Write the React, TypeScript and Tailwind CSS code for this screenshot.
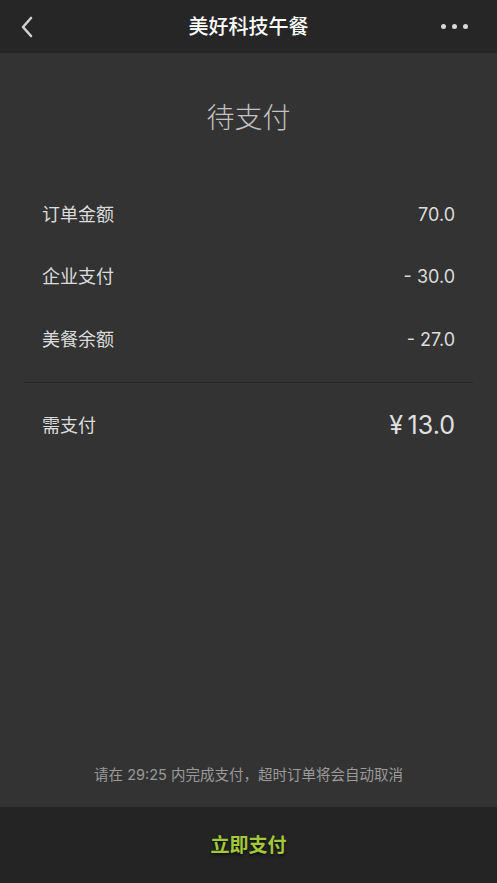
import React from "react";

const font = { fontFamily: 'Inter, "Noto Sans CJK SC", "Noto Sans", sans-serif' };

function Row({ label, value }: { label: string; value: string }) {
  return (
    <div className="flex h-[62.5px] items-center justify-between">
      <span className="text-[18px] text-[#dcdcdc]">{label}</span>
      <span className="text-[18px] text-[#dcdcdc]">{value}</span>
    </div>
  );
}

export default function App() {
  return (
    <div className="flex h-[883px] w-[497px] flex-col bg-[#333333]" style={font}>
      <div className="relative flex h-[53px] shrink-0 items-center justify-between bg-[#262626] px-[18px]">
        <svg width="16" height="22" viewBox="0 0 16 22" className="ml-[1px]">
          <path d="M12 2 L4 11 L12 20" fill="none" stroke="#d0d0d0" strokeWidth="2.6" strokeLinecap="round" strokeLinejoin="round" />
        </svg>
        <div className="absolute left-0 right-0 top-0 flex h-[53px] items-center justify-center text-[20px] font-medium text-white">
          美好科技午餐
        </div>
        <div className="mr-[11px] flex gap-[6px]">
          <span className="h-[5px] w-[5px] rounded-full bg-[#d8d8d8]" />
          <span className="h-[5px] w-[5px] rounded-full bg-[#d8d8d8]" />
          <span className="h-[5px] w-[5px] rounded-full bg-[#d8d8d8]" />
        </div>
      </div>

      <div className="flex flex-1 flex-col">
        <div className="pt-[41px] text-center text-[28px] font-light leading-[48px] text-[#c2c2c2]">待支付</div>
        <div className="mt-[41px] px-[42px]">
          <Row label="订单金额" value="70.0" />
          <Row label="企业支付" value="- 30.0" />
          <Row label="美餐余额" value="- 27.0" />
        </div>
        <div className="mx-[24px] mt-[11px] h-px bg-[#262626]" />
        <div className="flex h-[86px] items-center justify-between px-[42px]">
          <span className="text-[18px] text-[#dcdcdc]">需支付</span>
          <span className="text-[25px] text-[#e0e0e0]">¥&thinsp;13.0</span>
        </div>
        <div className="flex-1" />
        <div className="pb-[21px] text-center text-[14.5px] text-[#9a9a9a]">
          请在 29:25 内完成支付，超时订单将会自动取消
        </div>
      </div>

      <div className="flex h-[76px] shrink-0 items-center justify-center bg-[#242424] pt-[3px]">
        <span className="text-[19px] font-bold text-[#a3c83a] [text-shadow:0_2px_3px_rgba(0,0,0,0.6)]">立即支付</span>
      </div>
    </div>
  );
}
